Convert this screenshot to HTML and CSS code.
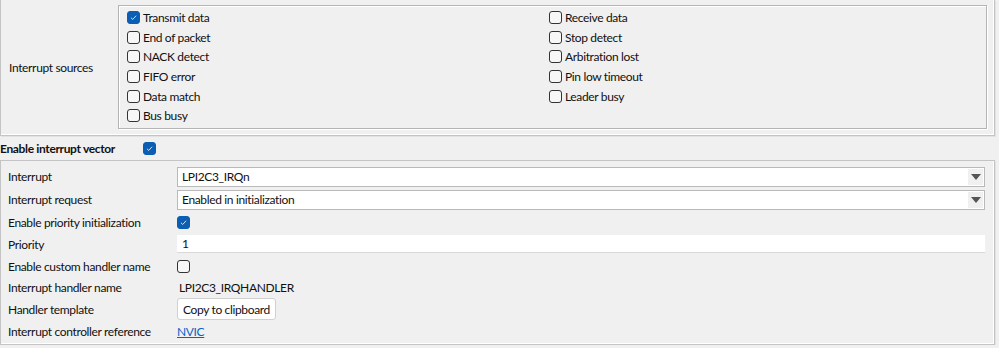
FILE: index.html
```html
<!DOCTYPE html>
<html lang="en">
<head>
    <meta charset="UTF-8">
    <meta name="viewport" content="width=device-width, initial-scale=1.0">
    <title>Interrupt settings</title>
    <link rel="stylesheet" href="styles.css">
</head>
<body>
    <div class="panel sources">
        <div class="side-label">Interrupt sources</div>
        <div class="group">
            <div class="col">
                <div class="opt"><span class="box on"><svg viewBox="0 0 13 13"><path d="M3.5 6.8 L5.6 8.8 L9.6 4.4" /></svg></span>Transmit data</div>
                <div class="opt"><span class="box"></span>End of packet</div>
                <div class="opt"><span class="box"></span>NACK detect</div>
                <div class="opt"><span class="box"></span>FIFO error</div>
                <div class="opt"><span class="box"></span>Data match</div>
                <div class="opt"><span class="box"></span>Bus busy</div>
            </div>
            <div class="col">
                <div class="opt"><span class="box"></span>Receive data</div>
                <div class="opt"><span class="box"></span>Stop detect</div>
                <div class="opt"><span class="box"></span>Arbitration lost</div>
                <div class="opt"><span class="box"></span>Pin low timeout</div>
                <div class="opt"><span class="box"></span>Leader busy</div>
            </div>
        </div>
    </div>

    <div class="heading">
        <span class="heading-text">Enable interrupt vector</span>
        <span class="box on"><svg viewBox="0 0 13 13"><path d="M3.5 6.8 L5.6 8.8 L9.6 4.4" /></svg></span>
    </div>

    <div class="panel vector">
        <div class="row r23">
            <div class="label">Interrupt</div>
            <div class="select"><span>LPI2C3_IRQn</span><span class="arrow"></span></div>
        </div>
        <div class="row r23">
            <div class="label">Interrupt request</div>
            <div class="select"><span>Enabled in initialization</span><span class="arrow"></span></div>
        </div>
        <div class="row">
            <div class="label">Enable priority initialization</div>
            <span class="box on"><svg viewBox="0 0 13 13"><path d="M3.5 6.8 L5.6 8.8 L9.6 4.4" /></svg></span>
        </div>
        <div class="row">
            <div class="label">Priority</div>
            <div class="text-input">1</div>
        </div>
        <div class="row">
            <div class="label">Enable custom handler name</div>
            <span class="box"></span>
        </div>
        <div class="row r21">
            <div class="label">Interrupt handler name</div>
            <div class="value">LPI2C3_IRQHANDLER</div>
        </div>
        <div class="row">
            <div class="label">Handler template</div>
            <button class="btn">Copy to clipboard</button>
        </div>
        <div class="row r23">
            <div class="label">Interrupt controller reference</div>
            <a class="link" href="#">NVIC</a>
        </div>
    </div>
</body>
</html>
```

FILE: styles.css
```css
* {
    margin: 0;
    padding: 0;
    box-sizing: border-box;
}

body {
    background-color: #f0f0f0;
    font-family: Lato, "Liberation Sans", sans-serif;
    font-size: 12px;
    letter-spacing: -0.35px;
    color: #111111;
    width: 999px;
}

.panel {
    width: 995px;
    border: 1px solid #c4c4c4;
    box-shadow: inset -1px -1px 0 #ffffff, 1px 1px 0 #e2e2e2;
}

.sources {
    display: flex;
    align-items: center;
    height: 136px;
    border-top: none;
    padding: 5px 0 6px 0;
}

.side-label {
    width: 117px;
    padding-left: 8px;
}

.group {
    width: 869px;
    height: 124px;
    border: 1px solid #b4b4b4;
    box-shadow: inset 1px 1px 0 #ffffff, 1px 1px 0 #ffffff;
    display: flex;
    padding: 2px 0 0 8px;
}

.col {
    width: 422px;
}

.opt {
    display: flex;
    align-items: center;
    height: 19.6px;
}

.box {
    width: 13px;
    height: 13px;
    border: 1px solid #333333;
    border-radius: 3px;
    background-color: #f7f7f7;
    margin-right: 3px;
    display: inline-flex;
    flex-shrink: 0;
}

.box.on {
    background-color: #0a5fb4;
    border-color: #0a5fb4;
}

.box svg {
    width: 11px;
    height: 11px;
}

.box path {
    fill: none;
    stroke: #dbe8f6;
    stroke-width: 1.1;
}

.heading {
    display: flex;
    align-items: center;
    height: 24px;
}

.heading-text {
    font-weight: bold;
    width: 143px;
    flex-shrink: 0;
}

.vector {
    height: 185px;
    padding: 4px 9px 0 0;
}

.row {
    display: flex;
    align-items: center;
    height: 22px;
}

.r23 {
    height: 23px;
}

.r21 {
    height: 21px;
}

.label {
    width: 176px;
    padding-left: 7px;
    flex-shrink: 0;
    white-space: nowrap;
}

.select {
    flex: 1;
    height: 20px;
    background-color: #ffffff;
    border: 1px solid #b9b9b9;
    display: flex;
    align-items: center;
    justify-content: space-between;
    padding-left: 4px;
}

.arrow {
    width: 15px;
    height: 16px;
    margin-right: 1px;
    background-color: #f0f0f0;
    position: relative;
}

.arrow::after {
    content: "";
    position: absolute;
    left: 3px;
    top: 5px;
    border-left: 5px solid transparent;
    border-right: 5px solid transparent;
    border-top: 6px solid #555555;
}

.text-input {
    flex: 1;
    height: 18px;
    background-color: #ffffff;
    border-bottom: 1px solid #d8d8d8;
    display: flex;
    align-items: center;
    padding-left: 5px;
}

.value {
    padding-left: 2px;
}

.btn {
    font-family: inherit;
    font-size: 12px;
    letter-spacing: -0.35px;
    color: #111111;
    background-color: #ffffff;
    border: 1px solid #d0d0d0;
    border-radius: 3px;
    height: 22px;
    padding: 0 5px;
    white-space: nowrap;
}

.link {
    color: #0b62c4;
    text-decoration: underline;
}
```
